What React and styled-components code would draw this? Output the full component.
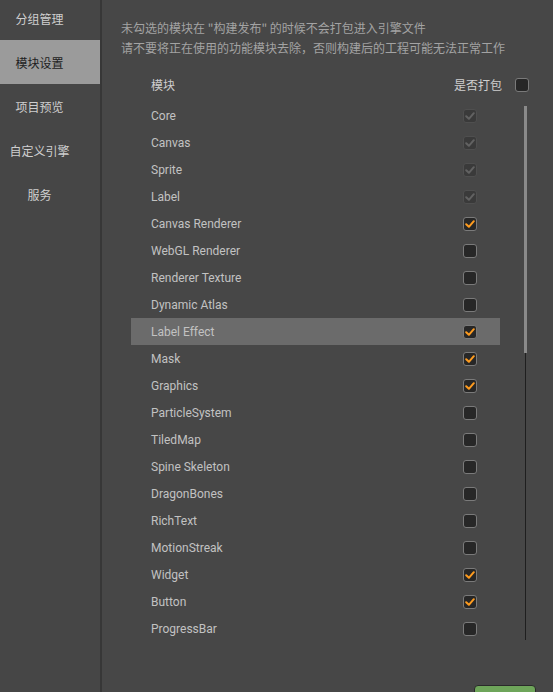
import styled, { createGlobalStyle } from "styled-components";

const GlobalStyle = createGlobalStyle`
	html, body {
		margin: 0;
		padding: 0;
		background: #474747;
		height: 100%;
		overflow: hidden;
	}
	#root {
		height: 100%;
	}
`;

const navItems = ["分组管理", "模块设置", "项目预览", "自定义引擎", "服务"];

// state: "locked" = always packed, "on" / "off" = user choice
const modules = [
	{ name: "Core", state: "locked" },
	{ name: "Canvas", state: "locked" },
	{ name: "Sprite", state: "locked" },
	{ name: "Label", state: "locked" },
	{ name: "Canvas Renderer", state: "on" },
	{ name: "WebGL Renderer", state: "off" },
	{ name: "Renderer Texture", state: "off" },
	{ name: "Dynamic Atlas", state: "off" },
	{ name: "Label Effect", state: "on", hover: true },
	{ name: "Mask", state: "on" },
	{ name: "Graphics", state: "on" },
	{ name: "ParticleSystem", state: "off" },
	{ name: "TiledMap", state: "off" },
	{ name: "Spine Skeleton", state: "off" },
	{ name: "DragonBones", state: "off" },
	{ name: "RichText", state: "off" },
	{ name: "MotionStreak", state: "off" },
	{ name: "Widget", state: "on" },
	{ name: "Button", state: "on" },
	{ name: "ProgressBar", state: "off" },
];

const Check = ({ color }) => (
	<svg width="10" height="10" viewBox="0 0 10 10">
		<path
			d="M1.2 5.2 L3.9 7.8 L8.8 2.2"
			fill="none"
			stroke={color}
			strokeWidth="2"
			strokeLinecap="round"
			strokeLinejoin="round"
		/>
	</svg>
);

const CheckBox = ({ state }) => (
	<Box locked={state === "locked"}>
		{state === "locked" && <Check color="#626262" />}
		{state === "on" && <Check color="#ff9c1f" />}
	</Box>
);

const App = () => {
	return (
		<Page>
			<GlobalStyle />
			<Sidebar>
				{navItems.map((item, i) => (
					<NavItem key={item} active={i === 1}>
						{item}
					</NavItem>
				))}
			</Sidebar>
			<Main>
				<Notes>
					<p>未勾选的模块在 "构建发布" 的时候不会打包进入引擎文件</p>
					<p>请不要将正在使用的功能模块去除，否则构建后的工程可能无法正常工作</p>
				</Notes>
				<Header>
					<span>模块</span>
					<HeaderRight>
						<span>是否打包</span>
						<CheckBox state="off" />
					</HeaderRight>
				</Header>
				<ListArea>
					<List>
						{modules.map((m) => (
							<Row key={m.name} hover={m.hover}>
								<Label>{m.name}</Label>
								<CheckBox state={m.state} />
							</Row>
						))}
					</List>
					<ScrollTrack>
						<ScrollThumb />
					</ScrollTrack>
				</ListArea>
				<Footer>
					<SaveButton aria-label="保存" />
				</Footer>
			</Main>
		</Page>
	);
};

export default App;

const Page = styled.div`
	display: flex;
	height: 692px;
	background: #474747;
	font-family: Roboto, "Noto Sans CJK SC", sans-serif;
	overflow: hidden;
`;

const Sidebar = styled.div`
	width: 100px;
	flex-shrink: 0;
	background: #464646;
	border-right: 2px solid #373737;
	margin-top: -4px;
`;

const NavItem = styled.div`
	height: 44px;
	display: flex;
	align-items: center;
	justify-content: center;
	padding-right: 21px;
	font-family: "Noto Sans CJK SC", sans-serif;
	font-size: 12px;
	color: ${(p) => (p.active ? "#1e1e1e" : "#cfcfcf")};
	background: ${(p) => (p.active ? "#9b9b9b" : "transparent")};
`;

const Main = styled.div`
	flex: 1;
	padding: 18px 0 0 19px;
	display: flex;
	flex-direction: column;
	min-width: 0;
`;

const Notes = styled.div`
	font-family: "Noto Sans CJK SC", sans-serif;
	font-size: 12px;
	color: #a3a3a3;
	line-height: 20px;

	p {
		margin: 0;
		white-space: nowrap;
	}
`;

const Header = styled.div`
	display: flex;
	align-items: center;
	justify-content: space-between;
	margin: 18px 0 0 30px;
	width: 378px;
	height: 18px;
	font-family: "Noto Sans CJK SC", sans-serif;
	font-size: 12px;
	color: #cfcfcf;
`;

const HeaderRight = styled.div`
	display: flex;
	align-items: center;
	gap: 13px;
`;

const ListArea = styled.div`
	display: flex;
	margin: 9px 0 0 10px;
	height: 538px;
`;

const List = styled.div`
	width: 369px;
	overflow: hidden;
`;

const Row = styled.div`
	height: 27px;
	display: flex;
	align-items: center;
	justify-content: space-between;
	padding: 0 23px 0 20px;
	background: ${(p) => (p.hover ? "#6b6b6b" : "transparent")};
`;

const Label = styled.span`
	font-size: 12px;
	color: #c2c2c2;
`;

const Box = styled.div`
	width: 14px;
	height: 14px;
	box-sizing: border-box;
	border-radius: 3px;
	border: 1px solid ${(p) => (p.locked ? "#4f4f4f" : "#7a7a7a")};
	background: ${(p) => (p.locked ? "#3a3a3a" : "#272727")};
	display: flex;
	align-items: center;
	justify-content: center;
`;

const ScrollTrack = styled.div`
	margin: 4px 0 0 24px;
	width: 3px;
	height: 534px;
	display: flex;
	flex-direction: column;
	align-items: center;
	background: linear-gradient(#1f1f1f, #1f1f1f) center / 1px 100% no-repeat;
`;

const ScrollThumb = styled.div`
	width: 3px;
	height: 247px;
	background: #8a8a8a;
`;

const Footer = styled.div`
	display: flex;
	justify-content: flex-end;
	padding: 45px 17px 0 0;
`;

const SaveButton = styled.button`
	width: 62px;
	height: 26px;
	border: 1px solid #2a2a2a;
	border-radius: 4px;
	background: #6ea55a;
	padding: 0;
`;
